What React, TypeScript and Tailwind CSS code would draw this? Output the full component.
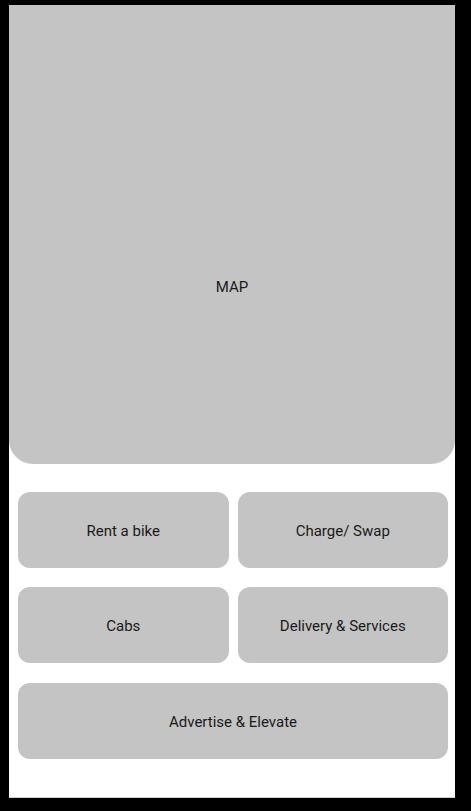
export default function App() {
  const tiles = ["Rent a bike", "Charge/ Swap", "Cabs", "Delivery & Services"];

  return (
    <div className="h-[811px] w-[471px] bg-black pt-[5px] pl-[9px]">
      <div
        className="flex h-[793px] w-[446px] flex-col bg-white border-b border-[#cfcfcf] text-[15px] text-[#1a1a1a]"
        style={{ fontFamily: "Roboto, 'Liberation Sans', sans-serif" }}
      >
        <div className="flex h-[459px] justify-center rounded-b-[24px] bg-[#c4c4c4] pt-[272px]">
          <span className="leading-[20px]">MAP</span>
        </div>

        <div className="mt-[28px] grid grid-cols-2 gap-x-[9px] gap-y-[19px] pl-[9px] pr-[7px]">
          {tiles.map((t) => (
            <div key={t} className="flex h-[76px] items-center justify-center rounded-[12px] bg-[#c4c4c4] pt-[2px]">
              {t}
            </div>
          ))}
          <div className="col-span-2 mt-[1px] flex h-[76px] items-center justify-center rounded-[12px] bg-[#c4c4c4] pt-[2px]">
            Advertise &amp; Elevate
          </div>
        </div>
      </div>
    </div>
  );
}
